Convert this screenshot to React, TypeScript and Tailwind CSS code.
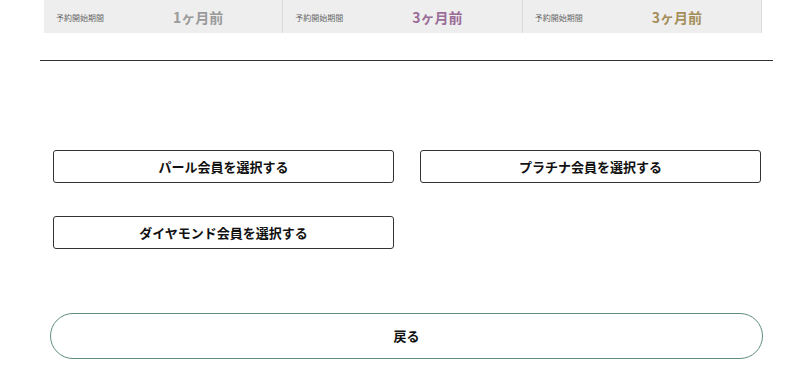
import React from "react";

const font = { fontFamily: '"Noto Sans CJK JP", "Noto Sans", sans-serif' };

function Cell({ value, color }: { value: string; color: string }) {
  return (
    <div className="relative flex h-full flex-1 items-center border-r border-[#dcdcdc]">
      <span className="absolute left-[12px] top-[12px] text-[8px] leading-[12px] text-[#666]">予約開始期間</span>
      <span className={`absolute left-[129px] top-[7px] text-[14px] font-bold leading-[20px] ${color}`}>{value}</span>
    </div>
  );
}

export default function App() {
  return (
    <div className="h-[389px] w-[794px] overflow-hidden bg-white text-[#222]" style={font}>
      <div className="ml-[44px] flex h-[33px] w-[718px] bg-[#eeeeee]">
        <Cell value="1ヶ月前" color="text-[#9a9a9a]" />
        <Cell value="3ヶ月前" color="text-[#9a6c98]" />
        <Cell value="3ヶ月前" color="text-[#a48e5a]" />
      </div>
      <div className="ml-[40px] mt-[27px] h-px w-[733px] bg-[#333]" />
      <div className="ml-[53px] mt-[89px] grid w-[708px] grid-cols-2 gap-x-[26px] gap-y-[33px]">
        <button className="flex h-[33px] items-center justify-center rounded-[3px] border border-[#333] bg-white text-[13px] font-bold text-[#111]">
          パール会員を選択する
        </button>
        <button className="flex h-[33px] items-center justify-center rounded-[3px] border border-[#333] bg-white text-[13px] font-bold text-[#111]">
          プラチナ会員を選択する
        </button>
        <button className="flex h-[33px] items-center justify-center rounded-[3px] border border-[#333] bg-white text-[13px] font-bold text-[#111]">
          ダイヤモンド会員を選択する
        </button>
      </div>
      <div className="ml-[50px] mt-[64px] flex h-[46px] w-[713px] items-center justify-center rounded-full border border-[#5f8c7e] bg-white text-[13px] font-bold text-[#111]">
        戻る
      </div>
    </div>
  );
}
